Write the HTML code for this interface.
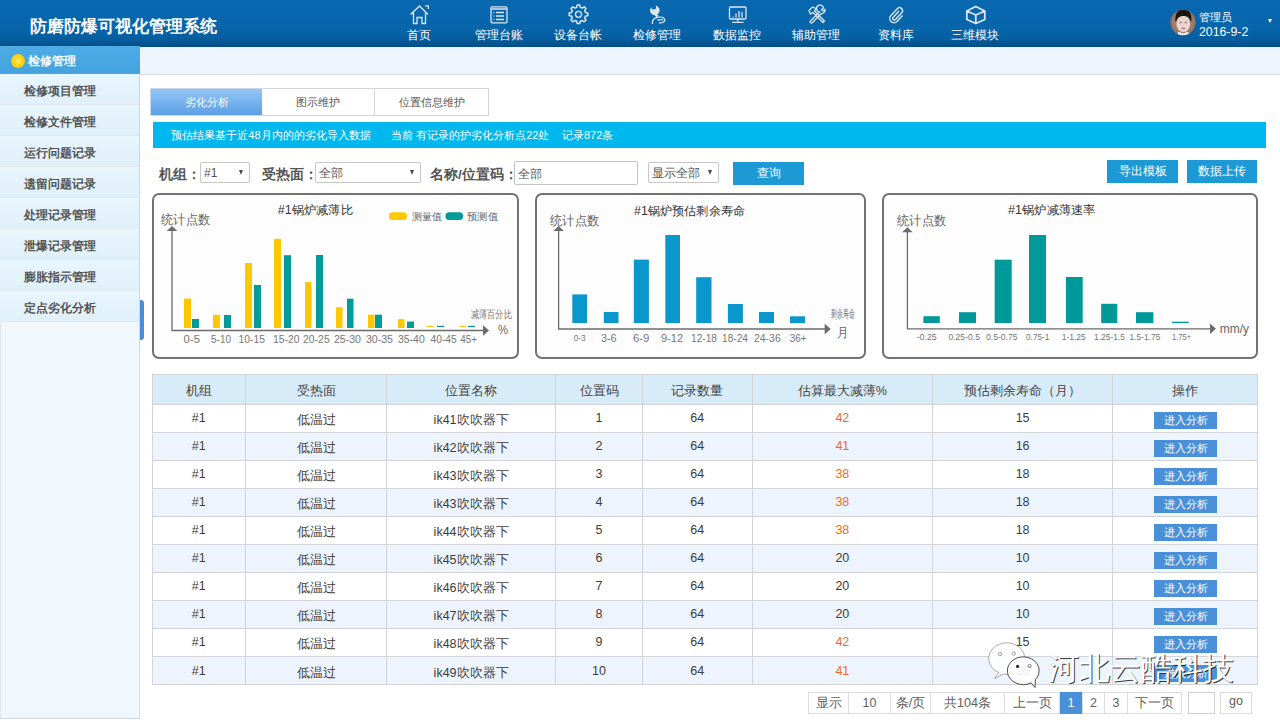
<!DOCTYPE html>
<html><head><meta charset="utf-8">
<style>
*{margin:0;padding:0;box-sizing:border-box}
html,body{width:1280px;height:725px;overflow:hidden;background:#fff;font-family:"Liberation Sans",sans-serif;color:#333}
.abs{position:absolute}
#hdr{left:0;top:0;width:1280px;height:47px;background:linear-gradient(#0868B0 0%,#0765AA 60%,#065D9E 84%,#05538C 94%,#044E86 100%)}
#title{left:30px;top:15px;font-size:17px;font-weight:bold;color:#fff;letter-spacing:0px;white-space:nowrap}
.navt{top:27px;width:80px;text-align:center;color:#fff;font-size:12.4px;line-height:16px;white-space:nowrap}
.nav{top:0;width:80px;height:46px;color:#fff;text-align:center}
.nav span{position:absolute;left:0;width:80px;top:27px;font-size:12.5px;line-height:15px;white-space:nowrap}
.nav svg{position:absolute;left:30px;top:4px}
#side{left:0;top:46px;width:140px;height:673px;background:#F0F7FD;border-right:1px solid #D3D7DB;border-bottom:1px solid #D3D7DB;border-left:1px solid #E2E6EA}
#stitle{left:0;top:46px;width:140px;height:28px;background:linear-gradient(#4DACE5,#44A3DD);color:#fff;font-size:12.5px;font-weight:bold}
.mi{left:0;width:139px;height:31px;background:linear-gradient(#E8F6FD,#E0F0FA);border-bottom:1px solid #E3E9ED;color:#555;font-size:12px;font-weight:bold;padding-left:24px;padding-top:2px;line-height:31px;white-space:nowrap}
#topbar{left:140px;top:47px;width:1140px;height:28px;background:#EEF4FC;border-bottom:1px solid #D9DDE2}
.tab{top:88px;height:28px;width:113px;border:1px solid #D6D6D6;background:#fff;font-size:11.2px;color:#555;text-align:center;line-height:26px}
#cyan{left:153px;top:122px;width:1113px;height:26px;background:#00B8EE;color:#fff;font-size:11.5px;line-height:26px;padding-left:18px;white-space:nowrap}
.lbl{top:165px;font-size:13.5px;font-weight:bold;color:#555;line-height:20px;white-space:nowrap}
.sel{height:21px;border:1px solid #C6C6C6;border-radius:2px;background:#fff;font-size:12px;color:#555;line-height:21px;padding-left:3px;white-space:nowrap}
.btn{background:#1D9AD6;color:#fff;font-size:12px;text-align:center;white-space:nowrap}
.chart{top:193px;height:166px;border:2px solid #727272;border-radius:7px;background:#FDFDFD}
table{position:absolute;left:152px;top:374px;width:1106px;border-collapse:collapse;font-size:12.5px;color:#333}
td,th{border:1px solid #D3D3D3;text-align:center;font-weight:normal;height:28px;padding:0}
th{background:#D8EBF9;height:30px;color:#444}
tr.alt td{background:#EDF4FD}
.or{color:#F26B1D}
.go{display:inline-block;width:63px;height:17px;background:#4A94DB;color:#fff;font-size:11px;line-height:17px;vertical-align:middle}
.pg{top:692px;height:22px;border:1px solid #DADADA;background:#fff;font-size:12.5px;color:#555;text-align:center;line-height:20px}
.cell{text-align:center;font-size:12.5px;color:#3C3C3C;white-space:nowrap}
.or{color:#F26A20}
.gob{width:63px;height:17px;background:#4A90D9;color:#fff;font-size:11px;line-height:17px;text-align:center;white-space:nowrap}
.pgc{top:692px;height:22px;border:1px solid #DCDCDC;background:#fff;font-size:12.5px;color:#606060;text-align:center;line-height:20px;white-space:nowrap}
.cyt{top:122px;height:26px;line-height:26px;font-size:11px;color:#fff;white-space:nowrap}
</style></head><body>
<div id="hdr" class="abs"></div>
<div id="title" class="abs">防磨防爆可视化管理系统</div>
<div id="side" class="abs"></div>
<div id="stitle" class="abs"></div>
<div id="topbar" class="abs"></div>

<div class="abs mi" style="top:74px">检修项目管理</div>
<div class="abs mi" style="top:105px">检修文件管理</div>
<div class="abs mi" style="top:136px">运行问题记录</div>
<div class="abs mi" style="top:167px">遗留问题记录</div>
<div class="abs mi" style="top:198px">处理记录管理</div>
<div class="abs mi" style="top:229px">泄爆记录管理</div>
<div class="abs mi" style="top:260px">膨胀指示管理</div>
<div class="abs mi" style="top:291px">定点劣化分析</div>
<div class="abs" style="left:140px;top:300px;width:4px;height:40px;background:#4A8EDB;border-radius:0 3px 3px 0"></div>
<div class="abs" style="left:10.5px;top:54px;width:14px;height:14px;border-radius:50%;background:radial-gradient(circle at 50% 50%,#FFE9A0 0,#FFE02A 25%,#FFCC10 60%,#F5A623 100%)"></div>
<div class="abs" style="left:28px;top:52px;font-size:12px;font-weight:bold;color:#F4F8FC;line-height:18px;white-space:nowrap">检修管理</div>

<div class="abs tab" style="left:150px;background:linear-gradient(#93C6F6,#5C9FE6);border-color:#C9D7E6;color:#fff">劣化分析</div>
<div class="abs tab" style="left:262px;border-left:none">图示维护</div>
<div class="abs tab" style="left:375px;border-left:none;width:114px">位置信息维护</div>
<div id="cyan" class="abs"></div>
<div class="abs cyt" style="left:171.3px">预估结果基于近48月内的的劣化导入数据</div><div class="abs cyt" style="left:391.2px">当前 有记录的护劣化分析点22处</div><div class="abs cyt" style="left:561.9px">记录872条</div>
<div class="abs lbl" style="left:159px">机组：</div>
<div class="abs sel" style="left:200px;top:162px;width:50px">#1<span style="position:absolute;right:6px;top:7px;width:0;height:0;border-left:2.8px solid transparent;border-right:2.8px solid transparent;border-top:5.2px solid #4A4A4A"></span></div>
<div class="abs lbl" style="left:262px">受热面：</div>
<div class="abs sel" style="left:315px;top:162px;width:106px">全部<span style="position:absolute;right:6px;top:7px;width:0;height:0;border-left:2.8px solid transparent;border-right:2.8px solid transparent;border-top:5.2px solid #4A4A4A"></span></div>
<div class="abs lbl" style="left:430px">名称/位置码：</div>
<div class="abs sel" style="left:514px;top:161px;width:124px;height:23.5px;line-height:24px;border-color:#C4C4C4">全部</div>
<div class="abs sel" style="left:647.5px;top:162px;width:71.5px">显示全部<span style="position:absolute;right:6px;top:7px;width:0;height:0;border-left:2.8px solid transparent;border-right:2.8px solid transparent;border-top:5.2px solid #4A4A4A"></span></div>
<div class="abs btn" style="left:733px;top:162px;width:71px;height:23px;line-height:23px">查询</div>
<div class="abs btn" style="left:1107px;top:160px;width:71px;height:23px;line-height:23px">导出模板</div>
<div class="abs btn" style="left:1187px;top:160px;width:70px;height:23px;line-height:23px">数据上传</div>
<div class="abs chart" style="left:152px;width:367px"></div>
<div class="abs chart" style="left:534.5px;width:331px"></div>
<div class="abs chart" style="left:881.5px;width:376px"></div>
<!-- charts --><svg class="abs" style="left:0;top:0" width="1280" height="725" font-family="Liberation Sans, sans-serif">
<path d="M172.0 230.0 V330.5 H484.0" stroke="#6B6B6B" stroke-width="1.3" fill="none"/><path d="M172.0 226.0 L166.7 231.0 L177.3 231.0 Z" fill="#6B6B6B"/><path d="M489.0 330.5 L483.0 325.3 L483.0 335.7 Z" fill="#6B6B6B"/>
<rect x="184.0" y="298.6" width="7.0" height="29.4" fill="#FFC800"/>
<rect x="213.0" y="314.8" width="7.0" height="13.2" fill="#FFC800"/>
<rect x="245.0" y="263.0" width="7.0" height="65.0" fill="#FFC800"/>
<rect x="274.0" y="238.8" width="7.0" height="89.2" fill="#FFC800"/>
<rect x="305.0" y="282.0" width="6.5" height="46.0" fill="#FFC800"/>
<rect x="336.0" y="307.3" width="6.5" height="20.7" fill="#FFC800"/>
<rect x="368.0" y="314.7" width="6.5" height="13.3" fill="#FFC800"/>
<rect x="398.0" y="319.2" width="6.5" height="8.8" fill="#FFC800"/>
<rect x="426.6" y="325.8" width="6.4" height="1.2" fill="#FFC800"/>
<rect x="459.8" y="325.8" width="6.2" height="1.2" fill="#FFC800"/>
<rect x="192.0" y="319.0" width="7.0" height="9.0" fill="#009C9A"/>
<rect x="224.0" y="315.0" width="7.0" height="13.0" fill="#009C9A"/>
<rect x="254.0" y="285.0" width="7.0" height="43.0" fill="#009C9A"/>
<rect x="284.0" y="255.2" width="7.0" height="72.8" fill="#009C9A"/>
<rect x="316.0" y="255.0" width="7.0" height="73.0" fill="#009C9A"/>
<rect x="347.0" y="298.7" width="6.5" height="29.3" fill="#009C9A"/>
<rect x="375.0" y="314.7" width="7.0" height="13.3" fill="#009C9A"/>
<rect x="407.0" y="321.6" width="7.0" height="6.4" fill="#009C9A"/>
<rect x="437.0" y="325.8" width="7.0" height="1.2" fill="#009C9A"/>
<rect x="468.0" y="325.8" width="7.0" height="1.2" fill="#009C9A"/>
<text x="183.6" y="342.5" font-size="11.2" fill="#777" textLength="16.4" lengthAdjust="spacingAndGlyphs">0-5</text>
<text x="211.0" y="342.5" font-size="11.2" fill="#777" textLength="20.0" lengthAdjust="spacingAndGlyphs">5-10</text>
<text x="238.5" y="342.5" font-size="11.2" fill="#777" textLength="26.5" lengthAdjust="spacingAndGlyphs">10-15</text>
<text x="273.0" y="342.5" font-size="11.2" fill="#777" textLength="26.4" lengthAdjust="spacingAndGlyphs">15-20</text>
<text x="303.0" y="342.5" font-size="11.2" fill="#777" textLength="26.7" lengthAdjust="spacingAndGlyphs">20-25</text>
<text x="334.0" y="342.5" font-size="11.2" fill="#777" textLength="27.0" lengthAdjust="spacingAndGlyphs">25-30</text>
<text x="366.0" y="342.5" font-size="11.2" fill="#777" textLength="27.0" lengthAdjust="spacingAndGlyphs">30-35</text>
<text x="398.0" y="342.5" font-size="11.2" fill="#777" textLength="26.7" lengthAdjust="spacingAndGlyphs">35-40</text>
<text x="430.5" y="342.5" font-size="11.2" fill="#777" textLength="26.2" lengthAdjust="spacingAndGlyphs">40-45</text>
<text x="460.3" y="342.5" font-size="11.2" fill="#777" textLength="16.7" lengthAdjust="spacingAndGlyphs">45+</text>
<text x="277.7" y="213.5" font-size="12.3" fill="#333" textLength="75.1" lengthAdjust="spacingAndGlyphs">#1锅炉减薄比</text>
<text x="161.0" y="224.3" font-size="12.5" fill="#666" textLength="49.0" lengthAdjust="spacingAndGlyphs">统计点数</text>
<rect x="389" y="212.3" width="18" height="7.7" rx="3.5" fill="#FFC800"/>
<rect x="445.5" y="212.3" width="17.5" height="7.7" rx="3.5" fill="#009C9A"/>
<text x="412.0" y="219.6" font-size="10.0" fill="#666" textLength="30.0" lengthAdjust="spacingAndGlyphs">测量值</text>
<text x="467.0" y="219.6" font-size="10.0" fill="#666" textLength="31.0" lengthAdjust="spacingAndGlyphs">预测值</text>
<text x="470.8" y="318.2" font-size="10.5" fill="#777" textLength="41.0" lengthAdjust="spacingAndGlyphs">减薄百分比</text>
<text x="498.0" y="334.1" font-size="12.0" fill="#666" textLength="10.0" lengthAdjust="spacingAndGlyphs">%</text>
<path d="M558.6 230.0 V329.0 H825.7" stroke="#6B6B6B" stroke-width="1.3" fill="none"/><path d="M558.6 226.0 L553.3 231.0 L563.9 231.0 Z" fill="#6B6B6B"/><path d="M830.7 329.0 L824.7 323.8 L824.7 334.2 Z" fill="#6B6B6B"/>
<rect x="572.3" y="294.4" width="14.7" height="28.6" fill="#0A98CC"/>
<rect x="603.8" y="312.0" width="14.7" height="11.0" fill="#0A98CC"/>
<rect x="633.8" y="259.6" width="15.1" height="63.4" fill="#0A98CC"/>
<rect x="665.3" y="235.0" width="14.7" height="88.0" fill="#0A98CC"/>
<rect x="696.2" y="277.2" width="15.3" height="45.8" fill="#0A98CC"/>
<rect x="727.9" y="304.0" width="15.0" height="19.0" fill="#0A98CC"/>
<rect x="759.0" y="312.0" width="15.0" height="11.0" fill="#0A98CC"/>
<rect x="790.0" y="316.3" width="15.0" height="6.7" fill="#0A98CC"/>
<text x="573.7" y="341.4" font-size="9.5" fill="#777" textLength="12.0" lengthAdjust="spacingAndGlyphs">0-3</text>
<text x="601.0" y="342.0" font-size="11.0" fill="#777" textLength="15.6" lengthAdjust="spacingAndGlyphs">3-6</text>
<text x="633.0" y="342.0" font-size="11.0" fill="#777" textLength="16.4" lengthAdjust="spacingAndGlyphs">6-9</text>
<text x="661.0" y="342.0" font-size="11.0" fill="#777" textLength="22.0" lengthAdjust="spacingAndGlyphs">9-12</text>
<text x="691.0" y="342.0" font-size="11.0" fill="#777" textLength="26.0" lengthAdjust="spacingAndGlyphs">12-18</text>
<text x="722.0" y="342.0" font-size="11.0" fill="#777" textLength="26.0" lengthAdjust="spacingAndGlyphs">18-24</text>
<text x="754.0" y="342.0" font-size="11.0" fill="#777" textLength="26.7" lengthAdjust="spacingAndGlyphs">24-36</text>
<text x="789.7" y="342.0" font-size="11.0" fill="#777" textLength="16.9" lengthAdjust="spacingAndGlyphs">36+</text>
<text x="634.0" y="214.7" font-size="12.3" fill="#333" textLength="111.0" lengthAdjust="spacingAndGlyphs">#1锅炉预估剩余寿命</text>
<text x="550.0" y="224.8" font-size="12.5" fill="#666" textLength="49.0" lengthAdjust="spacingAndGlyphs">统计点数</text>
<text x="830.7" y="318.4" font-size="11.5" fill="#777" textLength="23.8" lengthAdjust="spacingAndGlyphs">剩余寿命</text>
<text x="837.0" y="336.8" font-size="12.5" fill="#666" textLength="11.5" lengthAdjust="spacingAndGlyphs">月</text>
<path d="M907.4 231.3 V328.8 H1211.0" stroke="#6B6B6B" stroke-width="1.3" fill="none"/><path d="M907.4 227.3 L902.1 232.3 L912.7 232.3 Z" fill="#6B6B6B"/><path d="M1216.0 328.8 L1210.0 323.6 L1210.0 334.0 Z" fill="#6B6B6B"/>
<rect x="923.4" y="316.2" width="16.4" height="6.8" fill="#009999"/>
<rect x="959.0" y="312.2" width="17.0" height="10.8" fill="#009999"/>
<rect x="994.7" y="259.7" width="17.0" height="63.3" fill="#009999"/>
<rect x="1029.0" y="235.0" width="17.0" height="88.0" fill="#009999"/>
<rect x="1066.0" y="277.0" width="16.7" height="46.0" fill="#009999"/>
<rect x="1101.2" y="303.8" width="16.1" height="19.2" fill="#009999"/>
<rect x="1136.0" y="312.2" width="17.4" height="10.8" fill="#009999"/>
<rect x="1172.0" y="321.7" width="16.8" height="1.3" fill="#009999"/>
<text x="916.7" y="339.5" font-size="9.2" fill="#777" textLength="20.0" lengthAdjust="spacingAndGlyphs">-0.25</text>
<text x="948.4" y="339.5" font-size="9.2" fill="#777" textLength="31.6" lengthAdjust="spacingAndGlyphs">0.25-0.5</text>
<text x="986.0" y="339.5" font-size="9.2" fill="#777" textLength="31.6" lengthAdjust="spacingAndGlyphs">0.5-0.75</text>
<text x="1026.0" y="339.5" font-size="9.2" fill="#777" textLength="23.4" lengthAdjust="spacingAndGlyphs">0.75-1</text>
<text x="1061.7" y="339.5" font-size="9.2" fill="#777" textLength="24.1" lengthAdjust="spacingAndGlyphs">1-1.25</text>
<text x="1094.0" y="339.5" font-size="9.2" fill="#777" textLength="31.0" lengthAdjust="spacingAndGlyphs">1.25-1.5</text>
<text x="1129.6" y="339.5" font-size="9.2" fill="#777" textLength="30.9" lengthAdjust="spacingAndGlyphs">1.5-1.75</text>
<text x="1172.0" y="339.5" font-size="9.2" fill="#777" textLength="19.3" lengthAdjust="spacingAndGlyphs">1.75+</text>
<text x="1008.0" y="214.4" font-size="12.3" fill="#333" textLength="87.7" lengthAdjust="spacingAndGlyphs">#1锅炉减薄速率</text>
<text x="897.0" y="225.2" font-size="12.5" fill="#666" textLength="49.0" lengthAdjust="spacingAndGlyphs">统计点数</text>
<text x="1219.7" y="333.0" font-size="12.5" fill="#666" textLength="29.3" lengthAdjust="spacingAndGlyphs">mm/y</text>
</svg><!-- /charts -->
<!-- table --><div class="abs" style="left:0;top:0;width:1280px;height:725px">
<div class="abs" style="left:152.0px;top:374px;width:1105.3px;height:30px;background:#D8EBF9"></div>
<div class="abs" style="left:152.0px;top:404.00px;width:1105.3px;height:28.06px;background:#FFFFFF"></div>
<div class="abs" style="left:152.0px;top:432.06px;width:1105.3px;height:28.06px;background:#EDF4FD"></div>
<div class="abs" style="left:152.0px;top:460.12px;width:1105.3px;height:28.06px;background:#FFFFFF"></div>
<div class="abs" style="left:152.0px;top:488.18px;width:1105.3px;height:28.06px;background:#EDF4FD"></div>
<div class="abs" style="left:152.0px;top:516.24px;width:1105.3px;height:28.06px;background:#FFFFFF"></div>
<div class="abs" style="left:152.0px;top:544.30px;width:1105.3px;height:28.06px;background:#EDF4FD"></div>
<div class="abs" style="left:152.0px;top:572.36px;width:1105.3px;height:28.06px;background:#FFFFFF"></div>
<div class="abs" style="left:152.0px;top:600.42px;width:1105.3px;height:28.06px;background:#EDF4FD"></div>
<div class="abs" style="left:152.0px;top:628.48px;width:1105.3px;height:28.06px;background:#FFFFFF"></div>
<div class="abs" style="left:152.0px;top:656.54px;width:1105.3px;height:28.06px;background:#EDF4FD"></div>
<div class="abs" style="left:152.0px;top:373.50px;width:1106.3px;height:1px;background:#D2D4D8"></div>
<div class="abs" style="left:152.0px;top:403.50px;width:1106.3px;height:1px;background:#D2D4D8"></div>
<div class="abs" style="left:152.0px;top:431.56px;width:1106.3px;height:1px;background:#D2D4D8"></div>
<div class="abs" style="left:152.0px;top:459.62px;width:1106.3px;height:1px;background:#D2D4D8"></div>
<div class="abs" style="left:152.0px;top:487.68px;width:1106.3px;height:1px;background:#D2D4D8"></div>
<div class="abs" style="left:152.0px;top:515.74px;width:1106.3px;height:1px;background:#D2D4D8"></div>
<div class="abs" style="left:152.0px;top:543.80px;width:1106.3px;height:1px;background:#D2D4D8"></div>
<div class="abs" style="left:152.0px;top:571.86px;width:1106.3px;height:1px;background:#D2D4D8"></div>
<div class="abs" style="left:152.0px;top:599.92px;width:1106.3px;height:1px;background:#D2D4D8"></div>
<div class="abs" style="left:152.0px;top:627.98px;width:1106.3px;height:1px;background:#D2D4D8"></div>
<div class="abs" style="left:152.0px;top:656.04px;width:1106.3px;height:1px;background:#D2D4D8"></div>
<div class="abs" style="left:152.0px;top:684.10px;width:1106.3px;height:1px;background:#D2D4D8"></div>
<div class="abs" style="left:151.5px;top:374px;width:1px;height:310.60px;background:#D2D4D8"></div>
<div class="abs" style="left:245.0px;top:374px;width:1px;height:310.60px;background:#D2D4D8"></div>
<div class="abs" style="left:386.2px;top:374px;width:1px;height:310.60px;background:#D2D4D8"></div>
<div class="abs" style="left:555.0px;top:374px;width:1px;height:310.60px;background:#D2D4D8"></div>
<div class="abs" style="left:642.0px;top:374px;width:1px;height:310.60px;background:#D2D4D8"></div>
<div class="abs" style="left:751.5px;top:374px;width:1px;height:310.60px;background:#D2D4D8"></div>
<div class="abs" style="left:932.2px;top:374px;width:1px;height:310.60px;background:#D2D4D8"></div>
<div class="abs" style="left:1112.1px;top:374px;width:1px;height:310.60px;background:#D2D4D8"></div>
<div class="abs" style="left:1256.8px;top:374px;width:1px;height:310.60px;background:#D2D4D8"></div>
<div class="abs cell" style="left:152.0px;top:376px;width:93.5px;height:30px;line-height:30px;color:#444">机组</div>
<div class="abs cell" style="left:245.5px;top:376px;width:141.2px;height:30px;line-height:30px;color:#444">受热面</div>
<div class="abs cell" style="left:386.7px;top:376px;width:168.8px;height:30px;line-height:30px;color:#444">位置名称</div>
<div class="abs cell" style="left:555.5px;top:376px;width:87.0px;height:30px;line-height:30px;color:#444">位置码</div>
<div class="abs cell" style="left:642.5px;top:376px;width:109.5px;height:30px;line-height:30px;color:#444">记录数量</div>
<div class="abs cell" style="left:752.0px;top:376px;width:180.7px;height:30px;line-height:30px;color:#444">估算最大减薄%</div>
<div class="abs cell" style="left:932.7px;top:376px;width:179.9px;height:30px;line-height:30px;color:#444">预估剩余寿命（月）</div>
<div class="abs cell" style="left:1112.6px;top:376px;width:144.7px;height:30px;line-height:30px;color:#444">操作</div>
<div class="abs cell" style="left:152.0px;top:404.00px;width:93.5px;height:28px;line-height:28px">#1</div>
<div class="abs cell" style="left:245.5px;top:406.00px;width:141.2px;height:28px;line-height:28px">低温过</div>
<div class="abs cell" style="left:386.7px;top:406.00px;width:168.8px;height:28px;line-height:28px">ik41吹吹器下</div>
<div class="abs cell" style="left:555.5px;top:404.00px;width:87.0px;height:28px;line-height:28px">1</div>
<div class="abs cell" style="left:642.5px;top:404.00px;width:109.5px;height:28px;line-height:28px">64</div>
<div class="abs cell or" style="left:752.0px;top:404.00px;width:180.7px;height:28px;line-height:28px">42</div>
<div class="abs cell" style="left:932.7px;top:404.00px;width:179.9px;height:28px;line-height:28px">15</div>
<div class="abs gob" style="left:1154px;top:412.00px">进入分析</div>
<div class="abs cell" style="left:152.0px;top:432.06px;width:93.5px;height:28px;line-height:28px">#1</div>
<div class="abs cell" style="left:245.5px;top:434.06px;width:141.2px;height:28px;line-height:28px">低温过</div>
<div class="abs cell" style="left:386.7px;top:434.06px;width:168.8px;height:28px;line-height:28px">ik42吹吹器下</div>
<div class="abs cell" style="left:555.5px;top:432.06px;width:87.0px;height:28px;line-height:28px">2</div>
<div class="abs cell" style="left:642.5px;top:432.06px;width:109.5px;height:28px;line-height:28px">64</div>
<div class="abs cell or" style="left:752.0px;top:432.06px;width:180.7px;height:28px;line-height:28px">41</div>
<div class="abs cell" style="left:932.7px;top:432.06px;width:179.9px;height:28px;line-height:28px">16</div>
<div class="abs gob" style="left:1154px;top:440.06px">进入分析</div>
<div class="abs cell" style="left:152.0px;top:460.12px;width:93.5px;height:28px;line-height:28px">#1</div>
<div class="abs cell" style="left:245.5px;top:462.12px;width:141.2px;height:28px;line-height:28px">低温过</div>
<div class="abs cell" style="left:386.7px;top:462.12px;width:168.8px;height:28px;line-height:28px">ik43吹吹器下</div>
<div class="abs cell" style="left:555.5px;top:460.12px;width:87.0px;height:28px;line-height:28px">3</div>
<div class="abs cell" style="left:642.5px;top:460.12px;width:109.5px;height:28px;line-height:28px">64</div>
<div class="abs cell or" style="left:752.0px;top:460.12px;width:180.7px;height:28px;line-height:28px">38</div>
<div class="abs cell" style="left:932.7px;top:460.12px;width:179.9px;height:28px;line-height:28px">18</div>
<div class="abs gob" style="left:1154px;top:468.12px">进入分析</div>
<div class="abs cell" style="left:152.0px;top:488.18px;width:93.5px;height:28px;line-height:28px">#1</div>
<div class="abs cell" style="left:245.5px;top:490.18px;width:141.2px;height:28px;line-height:28px">低温过</div>
<div class="abs cell" style="left:386.7px;top:490.18px;width:168.8px;height:28px;line-height:28px">ik43吹吹器下</div>
<div class="abs cell" style="left:555.5px;top:488.18px;width:87.0px;height:28px;line-height:28px">4</div>
<div class="abs cell" style="left:642.5px;top:488.18px;width:109.5px;height:28px;line-height:28px">64</div>
<div class="abs cell or" style="left:752.0px;top:488.18px;width:180.7px;height:28px;line-height:28px">38</div>
<div class="abs cell" style="left:932.7px;top:488.18px;width:179.9px;height:28px;line-height:28px">18</div>
<div class="abs gob" style="left:1154px;top:496.18px">进入分析</div>
<div class="abs cell" style="left:152.0px;top:516.24px;width:93.5px;height:28px;line-height:28px">#1</div>
<div class="abs cell" style="left:245.5px;top:518.24px;width:141.2px;height:28px;line-height:28px">低温过</div>
<div class="abs cell" style="left:386.7px;top:518.24px;width:168.8px;height:28px;line-height:28px">ik44吹吹器下</div>
<div class="abs cell" style="left:555.5px;top:516.24px;width:87.0px;height:28px;line-height:28px">5</div>
<div class="abs cell" style="left:642.5px;top:516.24px;width:109.5px;height:28px;line-height:28px">64</div>
<div class="abs cell or" style="left:752.0px;top:516.24px;width:180.7px;height:28px;line-height:28px">38</div>
<div class="abs cell" style="left:932.7px;top:516.24px;width:179.9px;height:28px;line-height:28px">18</div>
<div class="abs gob" style="left:1154px;top:524.24px">进入分析</div>
<div class="abs cell" style="left:152.0px;top:544.30px;width:93.5px;height:28px;line-height:28px">#1</div>
<div class="abs cell" style="left:245.5px;top:546.30px;width:141.2px;height:28px;line-height:28px">低温过</div>
<div class="abs cell" style="left:386.7px;top:546.30px;width:168.8px;height:28px;line-height:28px">ik45吹吹器下</div>
<div class="abs cell" style="left:555.5px;top:544.30px;width:87.0px;height:28px;line-height:28px">6</div>
<div class="abs cell" style="left:642.5px;top:544.30px;width:109.5px;height:28px;line-height:28px">64</div>
<div class="abs cell" style="left:752.0px;top:544.30px;width:180.7px;height:28px;line-height:28px">20</div>
<div class="abs cell" style="left:932.7px;top:544.30px;width:179.9px;height:28px;line-height:28px">10</div>
<div class="abs gob" style="left:1154px;top:552.30px">进入分析</div>
<div class="abs cell" style="left:152.0px;top:572.36px;width:93.5px;height:28px;line-height:28px">#1</div>
<div class="abs cell" style="left:245.5px;top:574.36px;width:141.2px;height:28px;line-height:28px">低温过</div>
<div class="abs cell" style="left:386.7px;top:574.36px;width:168.8px;height:28px;line-height:28px">ik46吹吹器下</div>
<div class="abs cell" style="left:555.5px;top:572.36px;width:87.0px;height:28px;line-height:28px">7</div>
<div class="abs cell" style="left:642.5px;top:572.36px;width:109.5px;height:28px;line-height:28px">64</div>
<div class="abs cell" style="left:752.0px;top:572.36px;width:180.7px;height:28px;line-height:28px">20</div>
<div class="abs cell" style="left:932.7px;top:572.36px;width:179.9px;height:28px;line-height:28px">10</div>
<div class="abs gob" style="left:1154px;top:580.36px">进入分析</div>
<div class="abs cell" style="left:152.0px;top:600.42px;width:93.5px;height:28px;line-height:28px">#1</div>
<div class="abs cell" style="left:245.5px;top:602.42px;width:141.2px;height:28px;line-height:28px">低温过</div>
<div class="abs cell" style="left:386.7px;top:602.42px;width:168.8px;height:28px;line-height:28px">ik47吹吹器下</div>
<div class="abs cell" style="left:555.5px;top:600.42px;width:87.0px;height:28px;line-height:28px">8</div>
<div class="abs cell" style="left:642.5px;top:600.42px;width:109.5px;height:28px;line-height:28px">64</div>
<div class="abs cell" style="left:752.0px;top:600.42px;width:180.7px;height:28px;line-height:28px">20</div>
<div class="abs cell" style="left:932.7px;top:600.42px;width:179.9px;height:28px;line-height:28px">10</div>
<div class="abs gob" style="left:1154px;top:608.42px">进入分析</div>
<div class="abs cell" style="left:152.0px;top:628.48px;width:93.5px;height:28px;line-height:28px">#1</div>
<div class="abs cell" style="left:245.5px;top:630.48px;width:141.2px;height:28px;line-height:28px">低温过</div>
<div class="abs cell" style="left:386.7px;top:630.48px;width:168.8px;height:28px;line-height:28px">ik48吹吹器下</div>
<div class="abs cell" style="left:555.5px;top:628.48px;width:87.0px;height:28px;line-height:28px">9</div>
<div class="abs cell" style="left:642.5px;top:628.48px;width:109.5px;height:28px;line-height:28px">64</div>
<div class="abs cell or" style="left:752.0px;top:628.48px;width:180.7px;height:28px;line-height:28px">42</div>
<div class="abs cell" style="left:932.7px;top:628.48px;width:179.9px;height:28px;line-height:28px">15</div>
<div class="abs gob" style="left:1154px;top:636.48px">进入分析</div>
<div class="abs cell" style="left:152.0px;top:656.54px;width:93.5px;height:28px;line-height:28px">#1</div>
<div class="abs cell" style="left:245.5px;top:658.54px;width:141.2px;height:28px;line-height:28px">低温过</div>
<div class="abs cell" style="left:386.7px;top:658.54px;width:168.8px;height:28px;line-height:28px">ik49吹吹器下</div>
<div class="abs cell" style="left:555.5px;top:656.54px;width:87.0px;height:28px;line-height:28px">10</div>
<div class="abs cell" style="left:642.5px;top:656.54px;width:109.5px;height:28px;line-height:28px">64</div>
<div class="abs cell or" style="left:752.0px;top:656.54px;width:180.7px;height:28px;line-height:28px">41</div>
<div class="abs cell" style="left:932.7px;top:656.54px;width:179.9px;height:28px;line-height:28px">16</div>
<div class="abs gob" style="left:1154px;top:664.54px">进入分析</div>
</div><!-- /table -->
<!-- pager -->
<div class="abs" style="left:808px;top:692px;width:444px;height:22px">
</div>
<div class="abs pgc" style="left:808px;width:41px">显示</div>
<div class="abs pgc" style="left:848px;width:43px">10</div>
<div class="abs pgc" style="left:890px;width:41px">条/页</div>
<div class="abs pgc" style="left:930px;width:75px">共104条</div>
<div class="abs pgc" style="left:1004px;width:56px">上一页</div>
<div class="abs pgc" style="left:1060px;width:22px;background:#4A90D9;border-color:#4A90D9;color:#fff">1</div>
<div class="abs pgc" style="left:1082px;width:23px">2</div>
<div class="abs pgc" style="left:1104px;width:24px">3</div>
<div class="abs pgc" style="left:1127px;width:55px">下一页</div>
<div class="abs pgc" style="left:1188px;width:27px;border-color:#CFCFCF"></div>
<div class="abs pgc" style="left:1220px;width:32px;line-height:17px">go</div>
<!-- /pager -->
<!-- wm -->
<svg class="abs" style="left:0;top:0" width="1280" height="725">
 <path d="M998.9 672.8 L994.5 678.5 L1003.4 674.1 A18 15.8 0 1 0 998.9 672.8 Z" fill="rgba(255,255,255,0.93)" stroke="#8A8A8A" stroke-width="0.7"/>
 <circle cx="999.9" cy="654" r="1.7" fill="none" stroke="#8A8A8A" stroke-width="0.8"/>
 <circle cx="1013.9" cy="653.6" r="1.7" fill="none" stroke="#8A8A8A" stroke-width="0.8"/>
 <path d="M1031.15 682.8 L1035 687.5 L1035.4 679.7 A15.9 13.9 0 1 0 1031.15 682.8 Z" fill="rgba(255,255,255,0.91)" stroke="#3A3A3A" stroke-width="0.9"/>
 <circle cx="1017.6" cy="666.4" r="1.6" fill="#2A2A2A"/>
 <circle cx="1029.6" cy="666" r="1.6" fill="none" stroke="#5A5A5A" stroke-width="0.8"/>
</svg>
<div class="abs" style="left:1048px;top:648.5px;font-size:31.2px;line-height:40px;color:#fff;white-space:nowrap;text-shadow:1px 1px 0.6px rgba(0,0,0,0.75)">河北云酷科技</div>
<!-- /wm -->
<!-- nav -->
<div class="abs navt" style="left:379px">首页</div>
<div class="abs navt" style="left:459px">管理台账</div>
<div class="abs navt" style="left:538px">设备台帐</div>
<div class="abs navt" style="left:617px">检修管理</div>
<div class="abs navt" style="left:697px">数据监控</div>
<div class="abs navt" style="left:776px">辅助管理</div>
<div class="abs navt" style="left:856px">资料库</div>
<div class="abs navt" style="left:935px">三维模块</div>
<svg class="abs" style="left:0;top:0" width="1280" height="46" fill="none" stroke="#DCE6F0" stroke-width="1.3">
 <!-- house -->
 <path d="M410.5 14.5 L419.5 6 L428 14.5 M413.5 12 V23.5 H417 V17.5 H422 V23.5 H425.5 V12 M425 5.8 H428.3 V9"/>
 <!-- list box -->
 <rect x="491" y="6.8" width="16" height="16" rx="1.2"/>
 <path d="M491.5 9 H506.5 M496 12.5 H504 M496 16 H504 M496 19.5 H504 M493.5 12.5 h0.8 M493.5 16 h0.8 M493.5 19.5 h0.8" stroke-width="1.5"/>
 <!-- gear -->
 <path d="M587.82 13.05 L587.82 15.55 L585.46 16.15 L584.73 17.92 L585.97 20.00 L584.20 21.77 L582.12 20.53 L580.35 21.26 L579.75 23.62 L577.25 23.62 L576.65 21.26 L574.88 20.53 L572.80 21.77 L571.03 20.00 L572.27 17.92 L571.54 16.15 L569.18 15.55 L569.18 13.05 L571.54 12.45 L572.27 10.68 L571.03 8.60 L572.80 6.83 L574.88 8.07 L576.65 7.34 L577.25 4.98 L579.75 4.98 L580.35 7.34 L582.12 8.07 L584.20 6.83 L585.97 8.60 L584.73 10.68 L585.46 12.45 Z" stroke-linejoin="round" stroke-width="1.5"/>
 <circle cx="578.5" cy="14.3" r="3"/>
 <!-- wrench hand -->
 <circle cx="654.8" cy="10.4" r="4.8" fill="#DCE6F0" stroke="none"/>
 <circle cx="653.6" cy="7" r="2.5" fill="#0767AC" stroke="none"/>
 <path d="M655 13.5 L657.5 16.8" stroke-width="2.6"/>
 <path d="M652.5 24 C652 21 653 18.8 656 17.8 C659.5 16.6 663.5 16.8 664.6 19.2 C665.6 21.6 663 23 659 23 M657.5 20.2 C659.5 19.6 661.5 19.4 663 19.8" stroke-width="1.3"/>
 <!-- monitor -->
 <rect x="729.5" y="7" width="16.5" height="12" rx="1"/>
 <path d="M737.8 19 V21.5 M732 22.3 H743.5 M733 17.5 V16.5 M736 17.5 V13.5 M739 17.5 V11 M742 17.5 V12"/>
 <!-- tools -->
 <path d="M809 10.5 L812.5 7 L816 8.5 L814.5 11 L824.5 21 L823 22.5 L813 12.5 L810.5 14 Z" stroke-width="1.3"/>
 <path d="M823.5 8 A3.5 3.5 0 1 0 819.5 12 L810 21.5 A1.5 1.5 0 0 0 812 23 L821.5 13.5 A3.5 3.5 0 0 0 825 9.5 L823 11 L821.5 9.5 Z" stroke-width="1.3"/>
 <!-- paperclip -->
 <path d="M899 11 L893 17.5 A1.6 1.6 0 0 0 895.5 19.5 L901.5 13 A3 3 0 0 0 897.5 8.5 L891 15.5 A4 4 0 0 0 897 21.5 L902.5 15.5" stroke-width="1.4"/>
 <!-- cube -->
 <path d="M975.8 6.5 L984.8 11 V19.5 L975.8 23.5 L966.8 19.5 V11 Z M966.8 11 L975.8 15 L984.8 11 M975.8 15 V23.5" stroke-width="1.8" stroke-linejoin="round"/>
</svg>
<!-- user -->
<svg class="abs" style="left:1170px;top:9px" width="26" height="27" viewBox="0 0 26 27">
 <defs><clipPath id="av"><circle cx="13" cy="13.3" r="12.9"/></clipPath>
 <filter id="avb"><feGaussianBlur stdDeviation="0.45"/></filter>
 <radialGradient id="avbg" cx="50%" cy="50%" r="50%"><stop offset="0" stop-color="#B89080"/><stop offset="0.85" stop-color="#9A7868"/><stop offset="1" stop-color="#7A6256"/></radialGradient></defs>
 <g clip-path="url(#av)" filter="url(#avb)">
  <rect width="26" height="27" fill="url(#avbg)"/>
  <ellipse cx="13.3" cy="15" rx="6.8" ry="8.3" fill="#EBD6CF"/>
  <path d="M5.5 13 C4.5 3.5 8.5 0.8 13.5 0.8 C19 0.8 22.5 4 21.2 13 L20 11 C19.5 8 17 6.8 13.5 7 C10 7.2 7.5 8 6.8 11 Z" fill="#181414"/>
  <ellipse cx="10.6" cy="13.5" rx="1.4" ry="0.9" fill="#A08E8A"/>
  <ellipse cx="15.9" cy="13.5" rx="1.4" ry="0.9" fill="#A08E8A"/>
  <ellipse cx="13.3" cy="19.3" rx="2.2" ry="0.9" fill="#B87C76"/>
  <path d="M6.5 27 L8.5 22.8 L13.3 24.5 L18 22.8 L20 27 Z" fill="#EEF2F6"/>
 </g>
</svg>
<div class="abs" style="left:1199px;top:10px;font-size:11px;color:#fff;line-height:14px;white-space:nowrap">管理员</div>
<div class="abs" style="left:1199px;top:24.5px;font-size:12.3px;color:#fff;line-height:15px;white-space:nowrap">2016-9-2</div>
<div class="abs" style="left:1268.3px;top:19px;width:0;height:0;border-left:2.6px solid transparent;border-right:2.6px solid transparent;border-top:4.6px solid #fff"></div>
</body></html>
